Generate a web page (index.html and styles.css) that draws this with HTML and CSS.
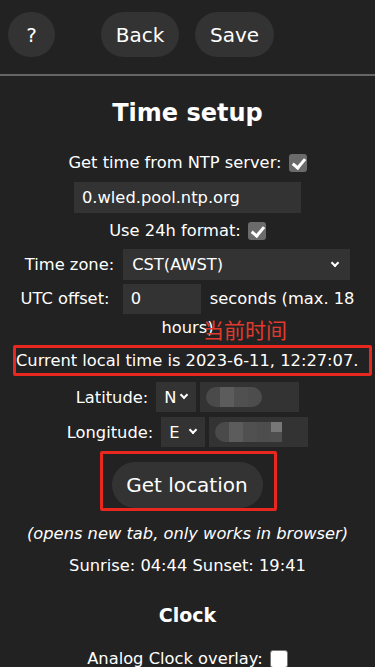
FILE: index.html
```html
<!DOCTYPE html>
<html lang="en">
<head>
    <meta charset="UTF-8">
    <meta name="viewport" content="width=device-width, initial-scale=1.0">
    <title>Time settings</title>
    <link rel="stylesheet" href="styles.css">
</head>
<body>
    <div class="toprow">
        <button type="button" class="btn help">?</button>
        <button type="button" class="btn back">Back</button>
        <button type="button" class="btn save">Save</button>
    </div>
    <hr class="sep">

    <h2>Time setup</h2>

    <div class="line txt r-ntp">Get time from NTP server: <span class="chk on"></span></div>
    <div class="line r-host"><span class="field ntp">0.wled.pool.ntp.org</span></div>
    <div class="line txt r-fmt">Use 24h format: <span class="chk on"></span></div>
    <div class="line r-tz">Time zone: <span class="field sel tz">CST(AWST)<i class="caret"></i></span></div>
    <div class="wrap r-utc">UTC offset: <span class="field utc">0</span> seconds (max. 18 hours)
        <span class="note">当前时间</span>
    </div>
    <div class="line r-cur"><span class="mark cur">Current local time is 2023-6-11, 12:27:07.</span></div>
    <div class="line r-lat">Latitude: <span class="field sel small">N<i class="caret"></i></span><span class="field blur lat"><b></b><b></b><b></b><b></b></span></div>
    <div class="line r-lon">Longitude: <span class="field sel small wide">E<i class="caret"></i></span><span class="field blur lon"><b></b><b></b><b></b><b></b><b></b></span></div>
    <div class="line r-loc">
        <span class="mark big"><button type="button" class="btn loc">Get location</button></span>
    </div>
    <div class="line txt hint">(opens new tab, only works in browser)</div>
    <div class="line txt sun">Sunrise: 04:44 Sunset: 19:41</div>

    <h3>Clock</h3>
    <div class="line txt r-clk">Analog Clock overlay: <span class="chk"></span></div>
</body>
</html>
```

FILE: styles.css
```css
* {
    box-sizing: border-box;
}

body {
    margin: 0;
    background-color: #222;
    color: #fff;
    font-family: "DejaVu Sans", Verdana, sans-serif;
    font-size: 16.3px;
    text-align: center;
}

.toprow {
    display: flex;
    padding: 12px 0 0 8px;
    height: 74px;
}

.btn {
    height: 45px;
    padding: 0;
    border: none;
    border-radius: 24px;
    background-color: #333;
    color: #fff;
    font-family: inherit;
    font-size: 20px;
}

.help {
    width: 47px;
}

.back {
    width: 78px;
    margin-left: 46px;
}

.save {
    width: 79px;
    margin-left: 16px;
}

.sep {
    margin: 0;
    border: none;
    border-top: 2px solid #666;
}

h2 {
    margin: 22px 0 0;
    line-height: 30px;
    font-size: 24px;
}

h3 {
    margin: 27px 0 0;
    line-height: 24px;
    font-size: 19px;
}

.line {
    display: flex;
    justify-content: center;
    align-items: center;
}

.txt {
    height: 20px;
    line-height: 20px;
}

.r-ntp { margin-top: 25px; }
.r-host { margin-top: 9px; }
.r-fmt { margin-top: 8px; }
.r-tz { margin-top: 8px; }
.r-utc { margin-top: 4px; }
.r-cur { margin-top: 3px; }
.r-lat { margin-top: 6px; }
.r-lon { margin-top: 5px; }
.r-loc { margin-top: 4px; }
.hint { margin-top: 13px; font-style: italic; }
.sun { margin-top: 12px; }
.r-clk { margin-top: 22px; }

.chk {
    display: inline-block;
    position: relative;
    width: 18px;
    height: 18px;
    margin-left: 7px;
    border-radius: 3px;
    background-color: #fff;
    border: 1px solid #777;
}

.chk.on {
    background-color: #6b6b6b;
    border: none;
}

.chk.on::after {
    content: "";
    position: absolute;
    left: 6px;
    top: 2px;
    width: 5px;
    height: 10px;
    border: solid #fff;
    border-width: 0 3px 3px 0;
    transform: rotate(40deg);
}

.field {
    display: inline-flex;
    align-items: center;
    height: 30px;
    padding: 0 8px;
    background-color: #333;
    text-align: left;
}

.ntp {
    width: 227px;
    height: 31px;
}

.sel {
    justify-content: space-between;
}

.tz {
    width: 227px;
    height: 31px;
    margin-left: 9px;
    padding: 0 10px 0 9px;
}

.caret {
    width: 6px;
    height: 6px;
    margin: 0 2px 4px 0;
    border: solid #fff;
    border-width: 0 2px 2px 0;
    transform: rotate(45deg);
}

.wrap {
    position: relative;
    padding: 0 18px;
    line-height: 28px;
}

.utc {
    width: 78px;
    height: 30px;
    margin: 0 4px 0 8px;
    vertical-align: middle;
}

.note {
    position: absolute;
    left: 203px;
    top: 32px;
    line-height: 26px;
    color: #e03a2e;
    font-family: "Noto Sans CJK SC", sans-serif;
    font-size: 21px;
}

.mark {
    display: inline-block;
    border: 3px solid #e8271f;
    border-radius: 2px;
}

.cur {
    width: 359px;
    margin-left: 10px;
    padding: 0 8px 0 0;
    line-height: 25px;
    text-align: left;
    white-space: nowrap;
}

.small {
    width: 40px;
    margin-left: 8px;
    padding: 0 7px 0 8px;
}

.wide {
    width: 44px;
}

.blur {
    margin-left: 4px;
    padding: 0 6px;
}

.lat {
    width: 99px;
}

.lon {
    width: 99px;
}

.blur b {
    width: 14px;
    height: 20px;
    background-color: #555;
}

.blur b:first-child {
    border-radius: 10px 0 0 10px;
    background-color: #4a4a4a;
}

.blur b:nth-child(2) {
    background-color: #5c5c5c;
}

.blur b:nth-child(3) {
    background-color: #505050;
}

.blur b:nth-child(4) {
    border-radius: 0 10px 10px 0;
    background-color: #4d4d4d;
}

.lon b:nth-child(4) {
    border-radius: 0;
}

.lon b:nth-child(5) {
    width: 11px;
    background: linear-gradient(#777 50%, #4f4f4f 50%);
}

.big {
    margin-left: 1px;
    padding: 8px 11px 0 9px;
}

.loc {
    width: 151px;
    height: 46px;
    display: block;
}
```
